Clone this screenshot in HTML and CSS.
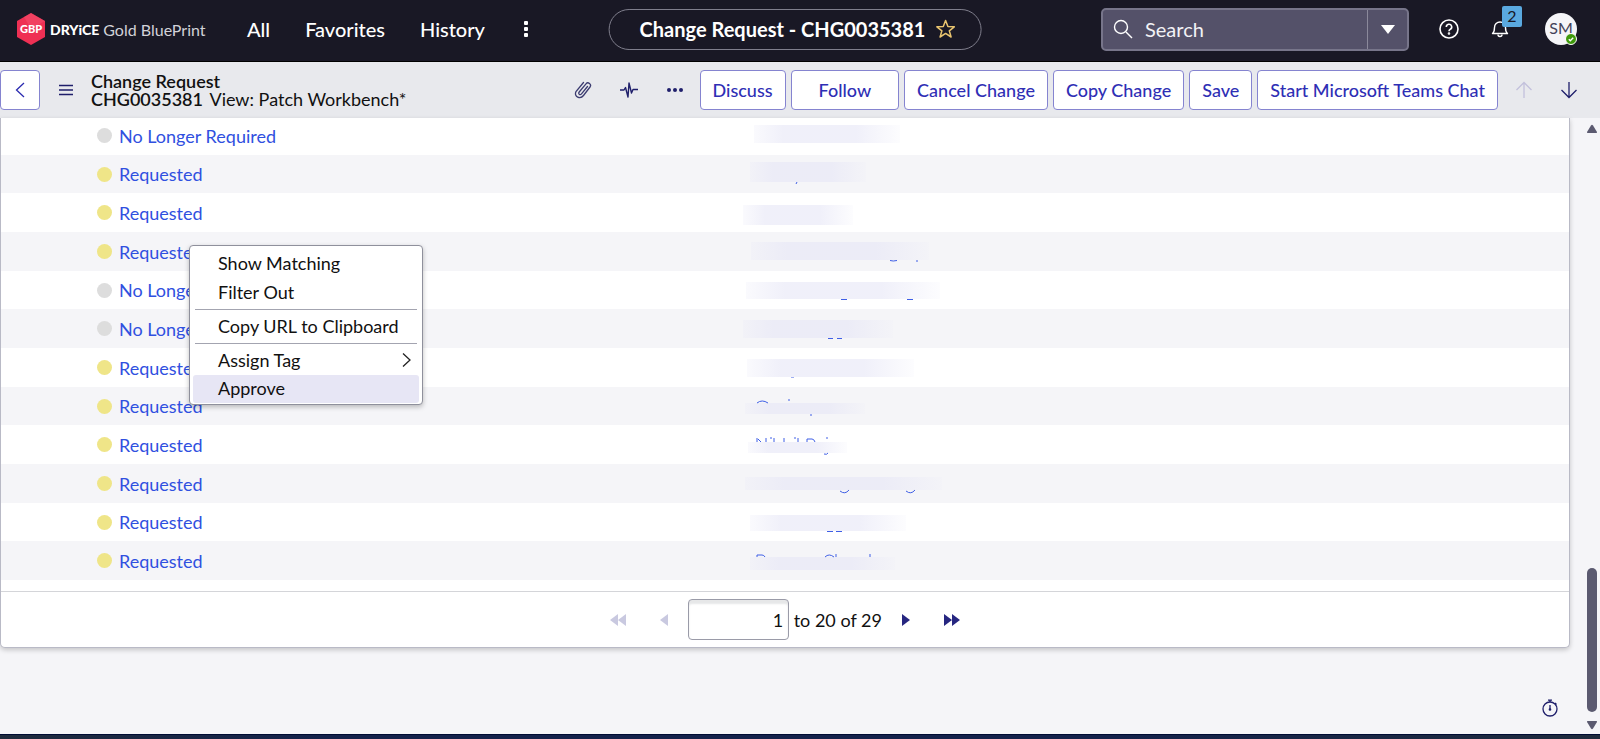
FILE: index.html
```html
<!DOCTYPE html>
<html lang="en">
<head>
  <meta charset="UTF-8" />
  <meta name="viewport" content="width=device-width, initial-scale=1.0"/>
  <title>Change Request - CHG0035381</title>
  <link rel="stylesheet" href="styles.css">
</head>
<body>

  <header class="top-bar">
    <a href="#" class="brand">
      <svg class="brand-hex" width="30" height="32" viewBox="0 0 30 32">
        <path d="M15 0L29 8V24L15 32L1 24V8Z" fill="#ef3054"/>
        <path d="M15 0L29 8L15 16L8 4Z" fill="#f4526d" opacity=".5"/>
        <text x="15" y="20" text-anchor="middle" class="hex-text">GBP</text>
      </svg>
      <strong>DRYiCE</strong>
      <span>Gold BluePrint</span>
    </a>
    <nav class="main-nav">
      <a href="#">All</a>
      <a href="#">Favorites</a>
      <a href="#">History</a>
      <button class="icon-btn" aria-label="More menus">
        <svg width="12" height="18" viewBox="0 0 12 18" fill="#fff"><rect x="4" y="1" width="4" height="4" rx="1"/><rect x="4" y="7" width="4" height="4" rx="1"/><rect x="4" y="13" width="4" height="4" rx="1"/></svg>
      </button>
    </nav>
    <div class="page-pill">
      <span>Change Request - CHG0035381</span>
      <button class="icon-btn" aria-label="Add to favorites">
        <svg width="20" height="20" viewBox="0 0 20 20" fill="none" stroke="#e9c46f" stroke-width="1.5" stroke-linejoin="round"><path d="M10 1.5L12.3 7.6L18.7 7.8L13.7 11.8L15.5 18L10 14.4L4.5 18L6.3 11.8L1.3 7.8L7.7 7.6Z"/></svg>
      </button>
    </div>
    <div class="top-tools">
      <form class="search">
        <svg width="20" height="20" viewBox="0 0 20 20" fill="none" stroke="#fff" stroke-width="1.4"><circle cx="8" cy="8" r="6.5"/><path d="M13 13l6 6"/></svg>
        <input type="text" placeholder="Search" aria-label="Search">
        <button type="button" aria-label="Search options">
          <svg width="14" height="9" viewBox="0 0 14 9"><path d="M0 0H14L7 9Z" fill="#fff"/></svg>
        </button>
      </form>
      <button class="icon-btn help" aria-label="Help">
        <svg width="22" height="22" viewBox="0 0 22 22" fill="none" stroke="#fff" stroke-width="1.6"><circle cx="11" cy="11" r="9"/><path d="M8.3 9a2.7 2.7 0 1 1 4 2.3c-.9.5-1.3.9-1.3 2"/><circle cx="11" cy="15.5" r=".5"/></svg>
      </button>
      <button class="icon-btn bell" aria-label="Notifications">
        <svg width="18" height="18" viewBox="0 0 18 18" fill="none" stroke="#fff" stroke-width="1.4"><path d="M1.5 13.5C3.5 12 3.5 10 3.5 7.5a5.5 5.5 0 0 1 11 0c0 2.5 0 4.5 2 6z" stroke-linejoin="round"/><path d="M7 14.5a2 2 0 0 0 4 0"/></svg>
        <span class="badge">2</span>
      </button>
      <button class="avatar" aria-label="User menu">SM
        <svg class="status" width="12" height="12" viewBox="0 0 12 12"><circle cx="6" cy="6" r="5.5" fill="#3f9a0c" stroke="#fff"/><path d="M3.8 6.2l1.5 1.5 2.9-3" fill="none" stroke="#fff" stroke-width="1.4"/></svg>
      </button>
    </div>
  </header>

  <div class="form-bar">
    <button class="btn back" aria-label="Back">
      <svg width="10" height="16" viewBox="0 0 10 16" fill="none" stroke="#2a2ab0" stroke-width="1.3"><path d="M9 1L1.5 8L9 15"/></svg>
    </button>
    <button class="icon-btn hamburger" aria-label="Form menu">
      <svg width="16" height="12" viewBox="0 0 16 12" stroke="#1f1f6b" stroke-width="1.5"><path d="M1 1.5H15M1 6H15M1 10.5H15"/></svg>
    </button>
    <h1 class="form-title">Change Request<br>CHG0035381 <span>View: Patch Workbench*</span></h1>
    <div class="form-icons">
      <button class="icon-btn" aria-label="Attachments">
        <svg width="18" height="20" viewBox="0 0 18 20" fill="none" stroke="#3c3c70" stroke-width="1.3" stroke-linecap="round"><path d="M13.5 6.5L7.5 13.8c-1.5 1.8-3.8 0-2.3-1.8L12 3.8c2-2.4 6 .4 4 3.2L9.5 15.5C6.5 19.5-.5 17 2 11.5L9.5 2.5"/></svg>
      </button>
      <button class="icon-btn" aria-label="Activity">
        <svg width="18" height="18" viewBox="0 0 18 18" fill="none" stroke="#1f1f6b" stroke-width="1.4" stroke-linejoin="round"><path d="M0 9H4L5.5 6.5L8 16L9 2L11.5 12L13 8.5H18"/></svg>
      </button>
      <button class="icon-btn" aria-label="More options">
        <svg width="18" height="6" viewBox="0 0 18 6" fill="#1f1f6b"><circle cx="3" cy="3" r="2"/><circle cx="9" cy="3" r="2"/><circle cx="15" cy="3" r="2"/></svg>
      </button>
    </div>
    <div class="form-actions">
      <button class="btn">Discuss</button>
      <button class="btn follow">Follow</button>
      <button class="btn">Cancel Change</button>
      <button class="btn">Copy Change</button>
      <button class="btn">Save</button>
      <button class="btn">Start Microsoft Teams Chat</button>
    </div>
    <div class="record-nav">
      <button class="icon-btn" disabled aria-label="Previous record">
        <svg width="18" height="18" viewBox="0 0 18 18" fill="none" stroke="#c3c1dc" stroke-width="1.3"><path d="M9 17V1.5M1.5 9L9 1.5L16.5 9"/></svg>
      </button>
      <button class="icon-btn" aria-label="Next record">
        <svg width="18" height="18" viewBox="0 0 18 18" fill="none" stroke="#1f1f6b" stroke-width="1.3"><path d="M9 1V16.5M1.5 9L9 16.5L16.5 9"/></svg>
      </button>
    </div>
  </div>

  <div class="content">
    <main>
      <section class="list-card">
        <svg width="0" height="0" class="defs">
          <linearGradient id="smudge"><stop offset="0" stop-color="#e6e6f6" stop-opacity=".2"/><stop offset=".2" stop-color="#e6e6f6" stop-opacity=".6"/><stop offset=".7" stop-color="#e6e6f6" stop-opacity=".6"/><stop offset="1" stop-color="#e6e6f6" stop-opacity=".1"/></linearGradient>
        </svg>
        <table>
          <tbody>
            <tr><td><a href="#" class="state grey">No Longer Required</a></td><td><svg class="hidden-name" viewBox="0 0 210 37"><rect x="14" y="7" width="146" height="18"/></svg></td></tr>
            <tr><td><a href="#" class="state">Requested</a></td><td><svg class="hidden-name" viewBox="0 0 210 37"><rect x="10" y="7" width="116" height="20"/><path d="M57 27l-1 2"/></svg></td></tr>
            <tr><td><a href="#" class="state">Requested</a></td><td><svg class="hidden-name" viewBox="0 0 210 37"><rect x="3" y="12" width="110" height="20"/></svg></td></tr>
            <tr><td><a href="#" class="state">Requested</a></td><td><svg class="hidden-name" viewBox="0 0 210 37"><rect x="11" y="10" width="178" height="18"/><path d="M150 28.5q3 1 7 0M176 29h2"/></svg></td></tr>
            <tr><td><a href="#" class="state grey">No Longer Required</a></td><td><svg class="hidden-name" viewBox="0 0 210 37"><rect x="6" y="11" width="194" height="17"/><path d="M101 28.5h6M167 28.5h6"/></svg></td></tr>
            <tr><td><a href="#" class="state grey">No Longer Required</a></td><td><svg class="hidden-name" viewBox="0 0 210 37"><rect x="3" y="11" width="150" height="18"/><path d="M88 29.5h5M97 29.5h5"/></svg></td></tr>
            <tr><td><a href="#" class="state">Requested</a></td><td><svg class="hidden-name" viewBox="0 0 210 37"><rect x="7" y="11" width="167" height="18"/><path d="M51 29.5h3" opacity=".5"/></svg></td></tr>
            <tr><td><a href="#" class="state">Requested</a></td><td><svg class="hidden-name" viewBox="0 0 210 37"><rect x="5" y="16" width="120" height="11"/><path d="M17 16q5-4 11 0M48 13h2M70 28h2"/></svg></td></tr>
            <tr><td><a href="#" class="state">Requested</a></td><td><svg class="hidden-name" viewBox="0 0 210 37"><rect x="8" y="17" width="99" height="11"/><path d="M17 13v4M18 14l3 3M26 13v4M30 13h2M34 13v4M44 13v4M54 13h2M58 13v4M67 17v-3h5q2 0 3 3M86 13h2M84 29q3 1 4-1"/></svg></td></tr>
            <tr><td><a href="#" class="state">Requested</a></td><td><svg class="hidden-name" viewBox="0 0 210 37"><rect x="5" y="13" width="197" height="13"/><path d="M100 27q5 4 9-1M166 27q5 4 9-1"/></svg></td></tr>
            <tr><td><a href="#" class="state">Requested</a></td><td><svg class="hidden-name" viewBox="0 0 210 37"><rect x="10" y="12" width="156" height="16"/><path d="M87 28.5h6M96 28.5h6"/></svg></td></tr>
            <tr><td><a href="#" class="state">Requested</a></td><td><svg class="hidden-name" viewBox="0 0 210 37"><rect x="10" y="16" width="145" height="13"/><path d="M17 16v-2h5q2 0 3 2M85 16q4-4 9 0M96 13v3M130 13v3"/></svg></td></tr>
          </tbody>
        </table>

        <div class="pager">
          <button class="icon-btn" disabled aria-label="First page"><svg width="16" height="12" viewBox="0 0 16 12" fill="#c9c9e0"><path d="M8 0V12L0 6ZM16 0V12L8 6Z"/></svg></button>
          <button class="icon-btn" disabled aria-label="Previous page"><svg width="8" height="12" viewBox="0 0 8 12" fill="#c9c9e0"><path d="M8 0V12L0 6Z"/></svg></button>
          <label><input type="text" value="1" aria-label="Go to row"> to 20 of 29</label>
          <button class="icon-btn" aria-label="Next page"><svg width="8" height="12" viewBox="0 0 8 12" fill="#262680"><path d="M0 0V12L8 6Z"/></svg></button>
          <button class="icon-btn" aria-label="Last page"><svg width="16" height="12" viewBox="0 0 16 12" fill="#262680"><path d="M0 0V12L8 6ZM8 0V12L16 6Z"/></svg></button>
        </div>

        <!-- row context menu -->
        <div class="context-menu">
          <button>Show Matching</button>
          <button>Filter Out</button>
          <hr>
          <button>Copy URL to Clipboard</button>
          <hr>
          <button>Assign Tag <svg width="9" height="16" viewBox="0 0 9 16" fill="none" stroke="#222" stroke-width="1.3"><path d="M1 1.5L8 8L1 14.5"/></svg></button>
          <button class="active">Approve</button>
        </div>
      </section>

      <button class="icon-btn timer" aria-label="Response time">
        <svg width="18" height="18" viewBox="0 0 18 18" fill="none" stroke="#1f1f6b" stroke-width="1.3"><circle cx="9" cy="10" r="7"/><path d="M9 6v5M7 1.2h4M9 1v2M14 4l1.5 1.5"/><circle cx="9" cy="10.5" r=".7"/></svg>
      </button>
    </main>
    <div class="scrollbar">
      <svg width="12" height="10" viewBox="0 0 12 10" fill="#5b5a70"><path d="M5 1.5Q6 0 7 1.5L11 8Q11.5 9 10 9H2Q.5 9 1 8Z"/></svg>
      <div class="thumb"></div>
      <svg width="12" height="10" viewBox="0 0 12 10" fill="#5b5a70"><path d="M5 8.5Q6 10 7 8.5L11 2Q11.5 1 10 1H2Q.5 1 1 2Z"/></svg>
    </div>
  </div>

  <footer class="bottom-strip"></footer>

</body>
</html>
```
FILE: styles.css
```css
* {
  box-sizing: border-box;
}
body {
  margin: 0;
  height: 100vh;
  display: flex;
  flex-direction: column;
  overflow: hidden;
  font-family: Lato, sans-serif;
  font-size: 18px;
  color: #111;
  background-color: #f5f5f8;
}
button, input {
  font: inherit;
  color: inherit;
}
button {
  cursor: pointer;
}
a {
  text-decoration: none;
}
svg {
  display: block;
  flex: none;
}
.icon-btn {
  display: flex;
  align-items: center;
  justify-content: center;
  padding: 0;
  border: none;
  background: none;
}

/* top navigation */
.top-bar {
  position: relative;
  display: flex;
  align-items: center;
  justify-content: space-between;
  height: 62px;
  padding: 0 23px 3px 16px;
  background-color: #191825;
  border-bottom: 1px solid #000;
  color: #fff;
  flex: none;
}
.brand {
  display: flex;
  align-items: center;
  gap: 4px;
  width: 231px;
  color: #d2d2d8;
  font-size: 16px;
  white-space: nowrap;
}
.brand strong {
  font-size: 14px;
  font-weight: 900;
  color: #fff;
}
.hex-text {
  font-size: 11px;
  font-weight: 900;
  fill: #fff;
}
.main-nav {
  display: flex;
  gap: 35px;
  font-size: 20px;
  font-weight: 500;
  margin-right: auto;
}
.main-nav a {
  color: #fff;
}
.page-pill {
  position: absolute;
  left: 50%;
  top: 9px;
  transform: translateX(-50%);
  display: flex;
  align-items: center;
  gap: 10px;
  height: 41px;
  margin-left: -5px;
  padding: 0 25px 2px 30px;
  border: 1px solid #7f7e8c;
  border-radius: 21px;
  font-size: 20px;
  font-weight: 700;
  white-space: nowrap;
}
.top-tools {
  display: flex;
  align-items: center;
}
.search {
  display: flex;
  align-items: center;
  width: 308px;
  height: 43px;
  padding-left: 10px;
  border: 2px solid #77758a;
  border-radius: 5px;
  background-color: #545169;
}
.search input {
  flex: 1;
  min-width: 0;
  padding: 0 0 0 12px;
  border: none;
  background: none;
  color: #fff;
  font-size: 20px;
  outline: none;
}
.search input::placeholder {
  color: #f2f2f5;
}
.search button {
  display: flex;
  align-items: center;
  justify-content: center;
  width: 40px;
  height: 39px;
  padding: 0;
  border: none;
  border-left: 1px solid #8b899b;
  background: none;
}
.help {
  margin-left: 29px;
}
.bell {
  position: relative;
  margin-left: 31px;
}
.badge {
  position: absolute;
  left: 11px;
  top: -14px;
  width: 20px;
  height: 21px;
  border-radius: 2px;
  background-color: #5aa9e0;
  color: #191825;
  font-size: 16px;
  line-height: 20px;
}
.avatar {
  position: relative;
  width: 32px;
  height: 32px;
  margin-left: 36px;
  padding: 0 0 3px;
  border: none;
  border-radius: 50%;
  background-color: #f5f5f8;
  color: #44435a;
  font-size: 16px;
}
.status {
  position: absolute;
  right: 0;
  bottom: 0;
}

/* form header */
.form-bar {
  display: flex;
  align-items: center;
  height: 56px;
  padding-right: 22px;
  background-color: #e8e9ed;
  flex: none;
}
.btn {
  height: 40px;
  padding: 0 12px;
  border: 1px solid #8584d0;
  border-radius: 4px;
  background-color: #fff;
  color: #2f2fb5;
  font-weight: 500;
  white-space: nowrap;
}
.back {
  display: flex;
  align-items: center;
  justify-content: center;
  width: 40px;
}
.hamburger {
  margin: 0 17px 0 18px;
}
.form-title {
  margin: 0 auto 0 0;
  font-size: 18px;
  line-height: 18px;
  font-weight: 600;
  white-space: nowrap;
}
.form-title span {
  margin-left: 2px;
  font-weight: 400;
}
.form-icons {
  display: flex;
  gap: 28px;
  margin-right: 16px;
}
.form-actions {
  display: flex;
  gap: 5px;
}
.follow {
  padding: 0 27px;
}
.record-nav {
  display: flex;
  gap: 27px;
  margin-left: 17px;
}

/* list */
.content {
  display: flex;
  flex: 1;
  min-height: 0;
}
main {
  flex: 1;
  display: flex;
  flex-direction: column;
  justify-content: space-between;
}
.list-card {
  position: relative;
  background-color: #fff;
  border: 1px solid #b9bac6;
  border-top: none;
  border-radius: 0 0 5px 5px;
  box-shadow: 0 2px 5px rgba(0, 0, 0, 0.2);
}
.defs {
  position: absolute;
}
table {
  width: 100%;
  border-collapse: collapse;
  table-layout: fixed;
}
tr {
  height: 39px;
}
tr:nth-child(3n+2) {
  height: 38px;
}
tr:first-child {
  height: 37px;
}
tr:nth-child(even) {
  background-color: #f5f5f8;
}
td {
  padding: 0;
}
td:first-child {
  width: 739px;
  padding-left: 96px;
}
tr:first-child td {
  padding-bottom: 2px;
}
td:last-child {
  vertical-align: top;
}
.state {
  display: flex;
  align-items: center;
  gap: 7px;
  color: #3050e0;
}
.state::before {
  content: "";
  width: 15px;
  height: 15px;
  border-radius: 50%;
  background-color: #efe588;
}
.state.grey::before {
  background-color: #dddddd;
}
.hidden-name {
  width: 210px;
  height: 35px;
  overflow: visible;
}
.hidden-name {
  height: 37px;
  margin-bottom: -2px;
}
.hidden-name rect {
  fill: url(#smudge);
}
.hidden-name path {
  fill: none;
  stroke: #3f5fe6;
  stroke-width: 1;
}
.pager {
  display: flex;
  align-items: center;
  justify-content: center;
  gap: 34px;
  height: 56px;
  margin-top: 11px;
  border-top: 1px solid #d4d5d9;
}
.pager label {
  margin: 0 -14px;
}
.pager input {
  width: 101px;
  height: 41px;
  padding: 0 5px;
  border: 1px solid #9a9ba8;
  border-radius: 4px;
  box-shadow: inset 0 4px 2px #e6e7e8;
  text-align: right;
}

.context-menu {
  position: absolute;
  left: 188px;
  top: 127px;
  width: 234px;
  padding: 3px 3px 1px;
  border: 1px solid #8f909c;
  border-radius: 4px;
  background-color: #fff;
  box-shadow: 0 2px 5px rgba(0, 0, 0, 0.25);
}
.context-menu button {
  display: flex;
  align-items: center;
  justify-content: space-between;
  width: 100%;
  height: 29px;
  padding: 0 8px 2px 25px;
  border: none;
  border-radius: 3px;
  background: none;
  text-align: left;
}
.context-menu button.active {
  height: 28px;
  background-color: #e7e6f5;
}
.context-menu hr {
  margin: 2px;
  border: none;
  border-top: 1px solid #a3a4b0;
}
.timer {
  align-self: flex-end;
  margin: 0 11px 17px 0;
}
.scrollbar {
  display: flex;
  flex-direction: column;
  align-items: center;
  width: 30px;
  padding: 6px 0 4px 13px;
}
.thumb {
  width: 10px;
  height: 144px;
  margin: auto 0 8px;
  border-radius: 5px;
  background-color: #5b5a70;
}
.bottom-strip {
  height: 5px;
  flex: none;
  border-top: 1px solid #000c33;
  background: linear-gradient(90deg, #1f2b3d 0, #14224b 20%, #14224b 70%, #1f2b3d 100%);
}
```
